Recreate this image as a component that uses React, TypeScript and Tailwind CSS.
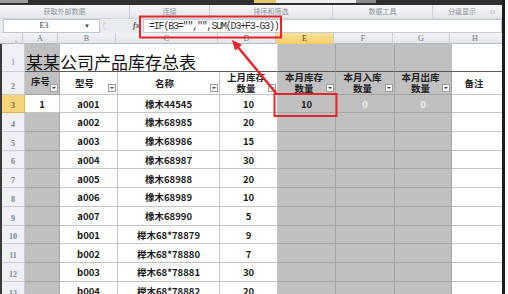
import React from 'react';

type DataRow = {
    n: number;
    a?: string;
    b: string;
    c: string;
    d: string;
    e?: string;
    f?: string;
    g?: string;
};

const data: DataRow[] = [
    { n: 3, a: '1', b: 'a001', c: '橡木44545', d: '10', e: '10', f: '0', g: '0' },
    { n: 4, b: 'a002', c: '橡木68985', d: '20' },
    { n: 5, b: 'a003', c: '橡木68986', d: '15' },
    { n: 6, b: 'a004', c: '橡木68987', d: '30' },
    { n: 7, b: 'a005', c: '橡木68988', d: '20' },
    { n: 8, b: 'a006', c: '橡木68989', d: '10' },
    { n: 9, b: 'a007', c: '橡木68990', d: '5' },
    { n: 10, b: 'b001', c: '榉木68*78879', d: '9' },
    { n: 11, b: 'b002', c: '榉木68*78880', d: '7' },
    { n: 12, b: 'b003', c: '榉木68*78881', d: '30' },
    { n: 13, b: 'b004', c: '榉木68*78882', d: '20' },
];

const cols = 'grid grid-cols-[23px_35px_58px_102px_58px_58px_59px_57px_50px]';
const cjk = "font-['Noto_Sans_CJK_SC',sans-serif]";

const FilterBtn = () => (
    <span className="absolute right-[1px] bottom-[2px] w-[8px] h-[8px] bg-[#f4f4f4] border border-[#9aa0a6] flex items-center justify-center">
        <span className="w-0 h-0 border-l-[2px] border-r-[2px] border-t-[2px] border-l-transparent border-r-transparent border-t-[#444]" />
    </span>
);

const RowNum = ({ n, active }: { n: number; active?: boolean }) => (
    <div
        className={
            active
                ? 'bg-[#f5d47a] border-r border-b border-[#d9b65a] text-[#6e6a55] text-[8px] flex items-end justify-center pb-[2px] font-["Liberation_Serif",serif]'
                : 'bg-[#eef0f3] border-r border-b border-[#c8cdd3] text-[#7d8894] text-[8px] flex items-end justify-center pb-[2px] font-["Liberation_Serif",serif]'
        }
    >
        {n}
    </div>
);

const Ribbon = () => (
    <div className="w-[502px]">
        <div className="h-[5px] flex bg-[#2f2f2f]">
            <div className="w-[28px] h-[3px] bg-[#9a9a9a]" />
            <div className="w-[226px]" />
            <div className="w-[22px] h-[3px] bg-[#e4c46a]" />
            <div className="w-[80px] h-[3px] bg-[#ededed]" />
            <div className="w-[20px] h-[3px] bg-[#8a8a8a]" />
        </div>
        <div className={`h-[13px] flex bg-gradient-to-b from-[#f5f6f8] to-[#e4e7eb] text-[7px] text-[#8d939a] ${cjk}`}>
            <div className="w-[130px] flex items-center justify-center border-r border-[#cfd3d8]">获取外部数据</div>
            <div className="w-[80px] flex items-center justify-center border-r border-[#cfd3d8]">连接</div>
            <div className="w-[123px] flex items-center justify-center border-r border-[#cfd3d8]">排序和筛选</div>
            <div className="w-[100px] flex items-center justify-center border-r border-[#cfd3d8]">数据工具</div>
            <div className="flex-1 flex items-center justify-center gap-[14px] pl-[8px]">
                <span>分级显示</span>
                <span className="text-[6px] text-[#a3a8ae]">⊡</span>
            </div>
        </div>
        <div className="h-[15px] flex bg-[#e9ecef] border-t border-[#d3d7dc]">
            <div className="w-[97px] ml-[3px] bg-white border border-[#bfc4ca] flex items-center text-[8px] text-[#333] font-['Liberation_Serif',serif]">
                <span className="w-[80px] text-center">E3</span>
                <span className="text-[6px] text-[#444]">▼</span>
            </div>
            <div className="w-[33px] flex items-center pl-[3px] text-[8px] text-[#c4c8cc]">(</div>
            <div className="w-[10px] flex items-center text-[8px] italic font-bold text-[#555] font-['Liberation_Serif',serif]">fx</div>
            <div className="flex-1 bg-white border border-[#c6cbd0] flex items-center pl-[5px] text-[10px] tracking-[-1.2px] text-[#333] font-['Liberation_Mono',monospace]">
                =IF(B3="","",SUM(D3+F3-G3))
            </div>
        </div>
        <div className={`${cols} h-[11px] text-[8px] text-[#6f7782] font-['Liberation_Serif',serif] bg-gradient-to-b from-[#f3f4f6] to-[#e2e5e9] border-b border-[#b4bac1]`}>
            <div className="border-r border-[#c9ced4] flex items-end justify-end pr-[2px] pb-[1px]">
                <span className="w-0 h-0 border-l-[5px] border-t-[5px] border-l-transparent border-t-[#c9ced4] rotate-180" />
            </div>
            <div className="border-r border-[#c9ced4] flex items-center justify-center">A</div>
            <div className="border-r border-[#c9ced4] flex items-center justify-center">B</div>
            <div className="border-r border-[#c9ced4] flex items-center justify-center">C</div>
            <div className="border-r border-[#c9ced4] flex items-center justify-center">D</div>
            <div className="border-r border-[#c9ced4] flex items-center justify-center bg-gradient-to-b from-[#fbe39a] to-[#f2c95e] text-[#5c4a1e]">E</div>
            <div className="border-r border-[#c9ced4] flex items-center justify-center">F</div>
            <div className="border-r border-[#c9ced4] flex items-center justify-center">G</div>
            <div className="flex items-center justify-center">H</div>
        </div>
    </div>
);

const Sheet = () => (
    <div className={`w-[502px] border-l-2 border-[#3a3a3a] ${cjk}`}>
        {/* row 1: title */}
        <div className={`${cols} h-[28px]`}>
            <RowNum n={1} />
            <div className="relative bg-[#c0c0c0] border-b border-[#5a5a5a]">
                <span className="absolute left-[1px] bottom-[1px] whitespace-nowrap text-[17px] leading-none text-[#111] z-10">
                    某某公司产品库存总表
                </span>
            </div>
            <div className="bg-white border-b border-[#5a5a5a]" />
            <div className="bg-white border-b border-[#5a5a5a]" />
            <div className="bg-white border-r border-b border-r-[#d4d4d4] border-b-[#5a5a5a]" />
            <div className="bg-[#c0c0c0] border-r border-b border-r-[#a5a5a5] border-b-[#5a5a5a]" />
            <div className="bg-[#c0c0c0] border-r border-b border-r-[#a5a5a5] border-b-[#5a5a5a]" />
            <div className="bg-[#c0c0c0] border-b border-[#5a5a5a]" />
            <div className="bg-white border-b border-[#5a5a5a]" />
        </div>
        {/* row 2: headers */}
        <div className={`${cols} h-[23px] text-[9.5px] font-bold text-[#222] leading-[11px]`}>
            <RowNum n={2} />
            <div className="relative bg-[#c0c0c0] border-r border-b border-[#a5a5a5] pl-[6px] pt-[4px]">
                序号
                <FilterBtn />
            </div>
            <div className="relative bg-white border-r border-b border-[#c4c4c4] flex items-center justify-center pr-[8px]">
                型号
                <FilterBtn />
            </div>
            <div className="relative bg-white border-r border-b border-[#c4c4c4] flex items-center justify-center pr-[8px]">
                名称
                <FilterBtn />
            </div>
            <div className="relative bg-white border-r border-b border-[#c4c4c4] flex flex-col items-center justify-center pr-[5px]">
                <span>上月库存</span>
                <span>数量</span>
                <FilterBtn />
            </div>
            <div className="relative bg-[#c0c0c0] border-r border-b border-[#a5a5a5] flex flex-col items-center justify-center pr-[5px]">
                <span>本月库存</span>
                <span>数量</span>
                <FilterBtn />
            </div>
            <div className="relative bg-[#c0c0c0] border-r border-b border-[#a5a5a5] flex flex-col items-center justify-center pr-[5px]">
                <span>本月入库</span>
                <span>数量</span>
                <FilterBtn />
            </div>
            <div className="relative bg-[#c0c0c0] border-r border-b border-[#a5a5a5] flex flex-col items-center justify-center pr-[5px]">
                <span>本月出库</span>
                <span>数量</span>
                <FilterBtn />
            </div>
            <div className="relative bg-white border-b border-[#c4c4c4] flex items-center justify-center pr-[6px]">
                备注
            </div>
        </div>
        {data.map((r) => (
            <div
                key={r.n}
                className={`${cols} ${r.n === 3 ? 'h-[18px]' : 'h-[18.75px]'} text-[9.5px] font-bold text-[#1a1a1a] leading-none`}
            >
                <RowNum n={r.n} active={r.n === 3} />
                <div
                    className={
                        r.n === 3
                            ? 'bg-white border-r border-b border-[#c4c4c4] flex items-end justify-center pb-[3px]'
                            : 'bg-[#c0c0c0] border-r border-b border-[#a5a5a5]'
                    }
                >
                    {r.a}
                </div>
                <div className="bg-white border-r border-b border-[#c4c4c4] flex items-end justify-center pb-[3px]">{r.b}</div>
                <div className="bg-white border-r border-b border-[#c4c4c4] flex items-end justify-center pb-[3px]">{r.c}</div>
                <div className="bg-white border-r border-b border-[#c4c4c4] flex items-end justify-center pb-[3px]">{r.d}</div>
                <div className="bg-[#c0c0c0] border-r border-b border-[#a5a5a5] flex items-end justify-center pb-[3px]">{r.e}</div>
                <div className="bg-[#c0c0c0] border-r border-b border-[#a5a5a5] flex items-end justify-center pb-[3px] text-[#eeeeee]">{r.f}</div>
                <div className="bg-[#c0c0c0] border-r border-b border-[#a5a5a5] flex items-end justify-center pb-[3px] text-[#eeeeee]">{r.g}</div>
                <div className="bg-white border-b border-[#c4c4c4]" />
            </div>
        ))}
    </div>
);

const Annotations = () => (
    <svg className="absolute left-0 top-0 pointer-events-none" width={508} height={294} viewBox="0 0 508 294">
        <rect x={140} y={16.5} width={141} height={21} fill="none" stroke="#e3262b" strokeWidth={2} />
        <rect x={274.5} y={94} width={62} height={22} fill="none" stroke="#e3262b" strokeWidth={2} />
        <line x1={276} y1={93} x2={237} y2={46} stroke="#e3262b" strokeWidth={2.5} />
        <polygon points="232,40 242,44.8 235,50.6" fill="#e3262b" />
    </svg>
);

export default function App() {
    return (
        <div className="relative w-[508px] h-[294px] overflow-hidden bg-white flex">
            <div className="w-[502px]">
                <Ribbon />
                <Sheet />
            </div>
            <div className="w-[3px] bg-[#1e1e1e]" />
            <div className="flex-1 bg-white" />
            <Annotations />
        </div>
    );
}
